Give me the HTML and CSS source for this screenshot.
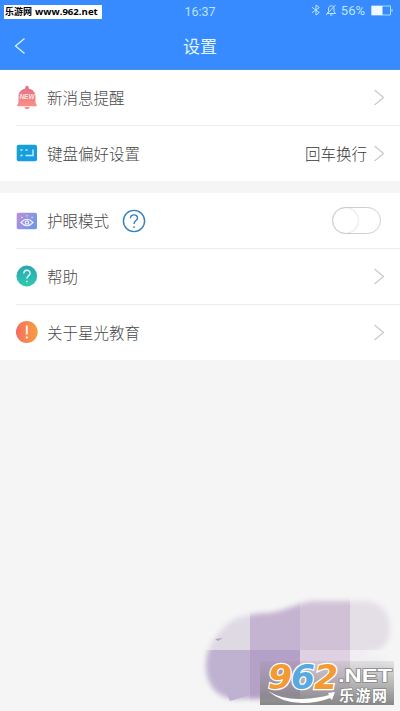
FILE: index.html
```html
<!DOCTYPE html>
<html lang="zh-CN">
<head>
<meta charset="utf-8">
<title>设置</title>
<link rel="stylesheet" href="styles.css">
</head>
<body>
<div class="screen">
  <header class="header">
    <div class="status">
      <span class="time">16:37</span>
      <div class="status-right">
        <svg class="bt" viewBox="0 0 10 12"><path d="M1 3.300l7.300 5.200L5 11V1l3.300 2.500L1 8.700"/></svg>
        <svg class="mute" viewBox="0 0 12 12"><path d="M2 9.500h8.500L9 7.500V5C9 3 8 1.800 6.200 1.800S3.500 3 3.500 5v2.500L2 9.500M5 11h2.500M10.500 1L1 11"/></svg>
        <span class="percent">56%</span>
        <svg class="battery" viewBox="0 0 23 11"><path d="M.5 1h19v9H.5zM21 4v3" class="battery-line"/><path d="M1 1h10.500v9H1z" class="battery-fill"/></svg>
      </div>
    </div>
    <div class="nav">
      <svg class="back" viewBox="0 0 12 18"><path d="M10.500 1.500L1.500 9l9 7.500"/></svg>
      <h1>设置</h1>
    </div>
    <div class="site-tag"><span class="site-cn">乐游网</span><span class="site-url">www.962.net</span></div>
  </header>

  <main>
    <section class="group">
      <div class="row">
        <svg class="icon bell" viewBox="0 0 22 26">
          <defs><linearGradient id="bell" x2="0" y2="1"><stop stop-color="#e66d89"/><stop offset="1" stop-color="#fa9587"/></linearGradient></defs>
          <path fill="url(#bell)" d="M9.300 3.400V2.500a1.700 1.700 0 0 1 3.400 0v.9c3.900.8 6.800 3.800 6.800 7.600v6.500l1.200 2.500v1.300H1.300V20l1.200-2.500V11c0-3.800 2.900-6.800 6.800-7.600zM8.300 22h5.400q-.4 2.200-2.700 2.200T8.300 22z"/>
          <text x="11" y="14.300" class="new">NEW</text>
        </svg>
        <span class="label">新消息提醒</span>
        <svg class="chevron" viewBox="0 0 12 17"><path d="M1.500 1L10.500 8.500 1.500 16"/></svg>
      </div>
      <div class="row">
        <svg class="icon" viewBox="0 0 22 22">
          <defs><linearGradient id="keys" x2="1" y2="1"><stop stop-color="#19a4cc"/><stop offset="1" stop-color="#1698ec"/></linearGradient></defs>
          <rect x=".7" y="2.700" width="20.300" height="16.500" rx="1.800" fill="url(#keys)"/>
          <path class="key-lines" d="M4.500 8h2M9.500 8h2M4.500 13.500h2M9.500 13.500h7.500V7.500"/>
        </svg>
        <span class="label">键盘偏好设置</span>
        <span class="value">回车换行</span>
        <svg class="chevron" viewBox="0 0 12 17"><path d="M1.500 1L10.500 8.500 1.500 16"/></svg>
      </div>
    </section>

    <section class="group">
      <div class="row">
        <svg class="icon" viewBox="0 0 22 22">
          <defs><linearGradient id="eye" x2="1" y2=".6"><stop stop-color="#bd8fdc"/><stop offset="1" stop-color="#7199e2"/></linearGradient></defs>
          <rect x=".7" y="2.700" width="20.300" height="16.500" rx="1.800" fill="url(#eye)"/>
          <path class="eye-lines" d="M5 12.500q6-6.500 12 0-6 6.500-12 0zM5.500 6.800l.8 1M11 5.300v1.300M16.500 6.800l-.8 1"/>
          <circle cx="11" cy="12.500" r="1.700" class="eye-lines"/>
        </svg>
        <span class="label">护眼模式</span>
        <svg class="info" viewBox="0 0 24 24"><circle cx="12" cy="12" r="10.600"/><path d="M8.500 9.300c0-4.500 7-4.500 7-.3 0 2.500-3.500 2.700-3.500 6M12 17.200v1.800"/></svg>
        <span class="switch"><span class="knob"></span></span>
      </div>
      <div class="row">
        <svg class="icon" viewBox="0 0 22 22">
          <defs><linearGradient id="help" x2="0" y2="1"><stop stop-color="#30a4b3"/><stop offset="1" stop-color="#2ccab0"/></linearGradient></defs>
          <circle cx="10.800" cy="11" r="10.400" fill="url(#help)"/>
          <path class="mark" d="M7.800 8.500c0-4.200 6.300-4.200 6.300-.3 0 2.400-3.200 2.500-3.200 5.500M10.900 15.700v1.500"/>
        </svg>
        <span class="label">帮助</span>
        <svg class="chevron" viewBox="0 0 12 17"><path d="M1.500 1L10.500 8.500 1.500 16"/></svg>
      </div>
      <div class="row">
        <svg class="icon" viewBox="0 0 22 22">
          <defs><linearGradient id="about" x2="1" y2="0"><stop stop-color="#f46d62"/><stop offset="1" stop-color="#f5a142"/></linearGradient></defs>
          <circle cx="10.800" cy="11" r="10.900" fill="url(#about)"/>
          <path class="bang" d="M10.800 4.500v9M10.800 15.500v2"/>
        </svg>
        <span class="label">关于星光教育</span>
        <svg class="chevron" viewBox="0 0 12 17"><path d="M1.500 1L10.500 8.500 1.500 16"/></svg>
      </div>
    </section>
  </main>

  <svg class="watermark" viewBox="200 590 200 121">
    <defs>
      <filter id="soft" x="-20%" y="-20%" width="140%" height="140%"><feGaussianBlur stdDeviation="2.500"/></filter>
      <mask id="blob" maskUnits="userSpaceOnUse" x="200" y="590" width="200" height="121">
        <path filter="url(#soft)" fill="#fff" d="M206 666C206 650 212 640 222 629C233 616 249 614 267 613C287 611 298 602 314 601H366C382 602 390 614 390 629C390 641 384 650 373 651L366 654L385 659V699H233C216 697 206 684 206 666Z"/>
        <path fill="#fff" d="M225 689l5 12 20-6z"/>
      </mask>
      <linearGradient id="plate" x2="0" y2="1"><stop stop-color="#888" stop-opacity=".15"/><stop offset=".5" stop-color="#888" stop-opacity=".55"/><stop offset="1" stop-color="#777" stop-opacity=".88"/></linearGradient>
    </defs>
    <g mask="url(#blob)">
      <path fill="#dfd9e4" d="M200 590h50v60h-50z"/>
      <path fill="#c5b4d1" d="M250 590h50v60h-50z"/>
      <path fill="#d1c1d6" d="M300 590h50v60h-50z"/>
      <path fill="#e4dfe6" d="M350 590h50v60h-50z"/>
      <path fill="#bfb2d1" d="M200 650h50v61h-50z"/>
      <path fill="#b5a0c8" d="M250 650h50v61h-50z"/>
      <path fill="#e0d1e2" d="M300 650h50v61h-50z"/>
      <path fill="#f0eef2" d="M350 650h50v61h-50z"/>
    </g>
    <path d="M215 639l3 2 5-3z" fill="#b1a2c4"/>
    <path fill="url(#plate)" d="M260 661h134v44H260z"/>
    <path d="M268 691q15 9 34 8 17-1 27-4l-1-2 7-1-3 8-2-2q-12 5-28 5-20 0-34-12z" fill="#fff"/>
    <g class="digits">
      <text x="268" y="689" textLength="24" lengthAdjust="spacingAndGlyphs" class="orange">9</text>
      <text x="291" y="689" textLength="24" lengthAdjust="spacingAndGlyphs" class="blue">6</text>
      <text x="314" y="689" textLength="24" lengthAdjust="spacingAndGlyphs" class="orange">2</text>
    </g>
    <text x="338" y="682" textLength="54" lengthAdjust="spacingAndGlyphs" class="net">.NET</text>
    <text x="339" y="701" textLength="48" lengthAdjust="spacing" class="net-cn">乐游网</text>
  </svg>
</div>
</body>
</html>
```
FILE: styles.css
```css
* { box-sizing: border-box; }

body {
  margin: 0;
  font-family: "Noto Sans CJK SC", sans-serif;
  background: #f5f5f5;
}

svg { display: block; flex: none; fill: none; }

.screen {
  position: relative;
  width: 400px;
  height: 711px;
  overflow: hidden;
}

.header {
  position: relative;
  height: 70px;
  background: #388bff;
  border-bottom: 1px solid #4b93dc;
  color: #e1f8ff;
}

.status {
  display: grid;
  grid-template-columns: 1fr auto 1fr;
  align-items: center;
  height: 22px;
  font: 12.5px Roboto, sans-serif;
  color: #b9e5ff;
}

.time { grid-column: 2; }

.status-right {
  display: flex;
  justify-content: flex-end;
  align-items: center;
  padding: 0 6px 2px 0;
}

.bt { width: 10px; height: 12px; margin-right: 4px; }
.mute { width: 12px; height: 12px; margin-right: 4px; }
.bt path, .mute path { stroke: #b9e5ff; stroke-width: 1; }
.percent { margin-right: 6px; font-size: 13px; }
.battery { width: 23px; height: 11px; }
.battery-line { stroke: #a9dcff; }
.battery-fill { fill: #effcff; }

.nav {
  display: grid;
  grid-template-columns: 1fr auto 1fr;
  align-items: center;
  height: 47px;
}

.back { width: 12px; height: 18px; margin-left: 14px; }
.back path { stroke: #d5f5ff; stroke-width: 1.300; }

h1 {
  margin: 0;
  font-size: 17px;
  font-weight: 400;
  line-height: 24px;
}

.site-tag {
  position: absolute;
  left: 4px;
  top: 5px;
  display: flex;
  align-items: center;
  gap: 3px;
  width: 98px;
  height: 14px;
  padding-left: 1px;
  background: #fff;
  color: #000;
  white-space: nowrap;
}

.site-cn { font-size: 9px; font-weight: 700; line-height: 14px; }
.site-url { font: bold 9.600px/14px "Open Sans", sans-serif; }

.group { background: #fff; margin-bottom: 12px; }

.row {
  position: relative;
  display: flex;
  align-items: center;
  height: 56px;
  padding: 0 15px 0 16px;
}

.row:first-child { height: 55px; }

.row + .row::before {
  content: "";
  position: absolute;
  left: 16px;
  right: 0;
  top: 0;
  border-top: 1px solid #ededed;
}

.icon { width: 22px; height: 22px; margin-right: 9px; }
.bell { height: 26px; }
.new {
  font: italic bold 6.500px "Liberation Sans", sans-serif;
  fill: #ffe2df;
  text-anchor: middle;
}

.key-lines { stroke: #c1f4ff; stroke-width: 1.400; }
.eye-lines { stroke: #f2edff; stroke-width: 1.200; }
.mark { stroke: #d5fff7; stroke-width: 1.400; }
.bang { stroke: #fff0d8; stroke-width: 2; }

.label, .value {
  padding-bottom: 1px;
  font-size: 15.500px;
  font-weight: 300;
  line-height: 24px;
  color: #484848;
}
.value { margin-left: auto; margin-right: 6px; color: #383838; }
.chevron { width: 12px; height: 17px; margin-left: auto; }
.value + .chevron { margin-left: 0; }
.chevron path { stroke: #c9c9c9; stroke-width: 1.200; }

.info { width: 24px; height: 24px; margin-left: 13px; }
.info circle, .info path { stroke: #347fbd; stroke-width: 1.400; }

.switch {
  width: 49px;
  height: 27px;
  margin-left: auto;
  margin-right: 4px;
  border: 1.500px solid #cfcfcf;
  border-radius: 14px;
}

.knob {
  display: block;
  width: 25px;
  height: 25px;
  border-radius: 50%;
  box-shadow: 0 0 2px #bbb;
}

.watermark {
  position: absolute;
  left: 200px;
  top: 590px;
  width: 200px;
  height: 121px;
}

.digits {
  font: italic bold 33px "DejaVu Sans", sans-serif;
  stroke: #fff;
  stroke-width: 2.500;
  paint-order: stroke;
}

.orange { fill: #f39a32; }
.blue { fill: #58a9e0; }

.net {
  font: bold 18px "Liberation Sans", sans-serif;
  fill: #fff;
  stroke: #888;
  stroke-width: 1.500;
  paint-order: stroke;
}

.net-cn {
  font-size: 15px;
  font-weight: 700;
  fill: #fff;
  stroke: #777;
  stroke-width: 1;
  paint-order: stroke;
}
```
